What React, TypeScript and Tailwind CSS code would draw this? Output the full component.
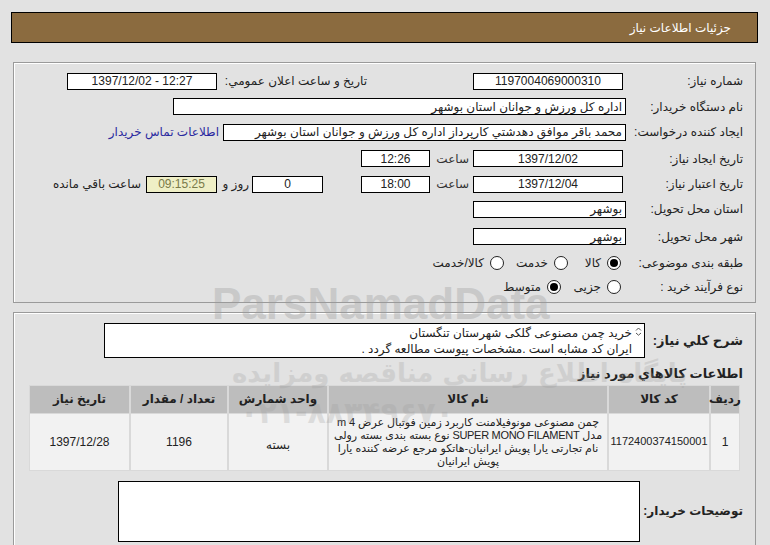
import React from "react";

const Box = ({ w, children, className = "", ltr }: { w: string; children?: React.ReactNode; className?: string; ltr?: boolean }) => (
  <div
    dir={ltr ? "ltr" : undefined}
    className={`${w} h-[17px] bg-white border border-black flex items-center px-[3px] text-[12px] leading-none whitespace-nowrap overflow-hidden ${className}`}
  >
    {children}
  </div>
);

const Radio = ({ checked }: { checked?: boolean }) => (
  <span className="w-[14px] h-[14px] rounded-full border border-[#222] bg-white flex items-center justify-center shrink-0">
    {checked && <span className="w-[8px] h-[8px] rounded-full bg-black" />}
  </span>
);

const Label = ({ children }: { children: React.ReactNode }) => (
  <div className="w-[117px] shrink-0 text-[12px] text-[#222] whitespace-nowrap">{children}</div>
);

export default function App() {
  return (
    <div
      dir="rtl"
      className="relative w-[770px] h-[545px] overflow-hidden bg-[#e2e2e2] text-[#222]"
      style={{ fontFamily: '"Liberation Sans", "DejaVu Sans", Tahoma, sans-serif' }}
    >
      {/* header */}
      <div className="mt-[12px] ml-[11px] mr-[12px] h-[31px] bg-[#8b6b3f] border border-black flex items-center pr-[26px] text-white text-[12px]">
        جزئيات اطلاعات نياز
      </div>

      {/* panel 1 */}
      <div className="mt-[19px] ml-[13px] mr-[14px] h-[241px] border border-[#9a9a9a] shadow-[inset_1px_1px_0_#fff] pt-[5px] pr-[12px] flex flex-col">
        <div className="h-[26px] flex items-center">
          <Label>شماره نياز:</Label>
          <Box w="w-[150px] mr-[3px] justify-center">1197004069000310</Box>
          <div className="w-[106px]" />
          <div className="w-[146px] text-[12px] whitespace-nowrap">تاريخ و ساعت اعلان عمومي:</div>
          <Box ltr w="w-[150px] mr-[4px] justify-center">1397/12/02 - 12:27</Box>
        </div>
        <div className="h-[25px] flex items-center">
          <Label>نام دستگاه خريدار:</Label>
          <Box w="w-[453px]">اداره کل ورزش و جوانان استان بوشهر</Box>
        </div>
        <div className="h-[26px] flex items-center">
          <Label>ايجاد کننده درخواست:</Label>
          <Box w="w-[403px]">محمد باقر موافق دهدشتي کارپرداز اداره کل ورزش و جوانان استان بوشهر</Box>
          <a className="mr-[4px] text-[12px] text-[#2a2aa0] whitespace-nowrap">اطلاعات تماس خريدار</a>
        </div>
        <div className="h-[27px] flex items-center">
          <Label>تاريخ ايجاد نياز:</Label>
          <Box w="w-[150px] mr-[3px] justify-center">1397/12/02</Box>
          <div className="w-[43px] pr-[4px] text-[12px] text-[#333]">ساعت</div>
          <Box w="w-[69px] justify-center">12:26</Box>
        </div>
        <div className="h-[24px] flex items-center">
          <Label>تاريخ اعتبار نياز:</Label>
          <Box w="w-[150px] mr-[3px] justify-center">1397/12/04</Box>
          <div className="w-[43px] pr-[4px] text-[12px] text-[#333]">ساعت</div>
          <Box w="w-[69px] justify-center">18:00</Box>
          <div className="w-[38px]" />
          <Box w="w-[71px] justify-center">0</Box>
          <div className="w-[35px] pr-[3px] text-[12px] whitespace-nowrap">روز و</div>
          <Box w="w-[71px] justify-center !bg-[#efefc6] text-[#7a7a4a] border-[#555]">09:15:25</Box>
          <div className="pr-[5px] text-[12px] whitespace-nowrap">ساعت باقي مانده</div>
        </div>
        <div className="h-[26px] flex items-center">
          <Label>استان محل تحويل:</Label>
          <Box w="w-[153px]">بوشهر</Box>
        </div>
        <div className="h-[29px] flex items-center">
          <Label>شهر محل تحويل:</Label>
          <Box w="w-[153px]">بوشهر</Box>
        </div>
        <div className="h-[24px] flex items-center text-[12px]">
          <Label>طبقه بندی موضوعی:</Label>
          <div className="mr-[5px] flex items-center">
            <Radio checked />
            <span className="mr-[6px] w-[33px]">کالا</span>
            <Radio />
            <span className="mr-[6px] w-[44px]">خدمت</span>
            <Radio />
            <span className="mr-[6px]">کالا/خدمت</span>
          </div>
        </div>
        <div className="h-[24px] flex items-center text-[12px]">
          <Label>نوع فرآيند خريد :</Label>
          <div className="mr-[5px] flex items-center">
            <Radio />
            <span className="mr-[6px] w-[40px]">جزيی</span>
            <Radio checked />
            <span className="mr-[6px]">متوسط</span>
          </div>
        </div>
      </div>

      {/* panel 2 */}
      <div className="mt-[9px] ml-[13px] mr-[14px] h-[300px] border border-[#9a9a9a] shadow-[inset_1px_1px_0_#fff] pt-[10px] pr-[12px] pl-[15px] flex flex-col">
        <div className="flex items-center">
          <div className="w-[98px] shrink-0 text-[13px] font-bold whitespace-nowrap">شرح کلي نياز:</div>
          <div className="w-[541px] h-[35px] bg-white border border-black flex text-[12px] leading-[16px]">
            <div className="w-[12px] flex justify-center pt-[3px]">
              <svg width="7" height="9" viewBox="0 0 7 9">
                <path d="M1 3.5 L3.5 1 L6 3.5" fill="none" stroke="#555" strokeWidth="1" />
                <path d="M1 6 L3.5 8.2 L6 6" fill="none" stroke="#555" strokeWidth="1" />
              </svg>
            </div>
            <div className="pt-[1px] whitespace-nowrap">
              <div>خريد چمن مصنوعی گلکی شهرستان تنگستان</div>
              <div>ايران کد مشابه است .مشخصات پيوست مطالعه گردد .</div>
            </div>
          </div>
        </div>

        <div className="mt-[6px] text-[13px] font-bold">اطلاعات کالاهاي مورد نياز</div>

        <div className="mt-[1px] mr-[3px] w-[711px] bg-[#d9d9d9] p-[1px] flex flex-col gap-[1px]">
          <div className="flex h-[27px] gap-[2px] text-[12px] font-bold">
            <div className="w-[28px] bg-[#bdbdbd] flex items-center justify-center">رديف</div>
            <div className="w-[100px] bg-[#bdbdbd] flex items-center justify-center">کد کالا</div>
            <div className="w-[278px] bg-[#bdbdbd] flex items-center justify-center">نام کالا</div>
            <div className="w-[98px] bg-[#bdbdbd] flex items-center justify-center">واحد شمارش</div>
            <div className="w-[96px] bg-[#bdbdbd] flex items-center justify-center">تعداد / مقدار</div>
            <div className="flex-1 bg-[#bdbdbd] flex items-center justify-center">تاريخ نياز</div>
          </div>
          <div className="flex h-[56px] gap-[2px] text-[12px]">
            <div className="w-[28px] bg-[#f2f2f2] flex items-center justify-center">1</div>
            <div className="w-[100px] bg-[#f2f2f2] flex items-center justify-center text-[11px]">1172400374150001</div>
            <div className="w-[278px] bg-[#f2f2f2] flex flex-col items-center justify-center text-[11px] leading-[13px] whitespace-nowrap tracking-[-0.3px]">
              <div>چمن مصنوعی مونوفيلامنت کاربرد زمين فوتبال عرض 4 m</div>
              <div>مدل SUPER MONO FILAMENT نوع بسته بندی بسته رولی</div>
              <div>نام تجارتی يارا پويش ايرانيان-هاتکو مرجع عرضه کننده يارا</div>
              <div>پويش ايرانيان</div>
            </div>
            <div className="w-[98px] bg-[#f2f2f2] flex items-center justify-center pt-[6px]">بسته</div>
            <div className="w-[96px] bg-[#f2f2f2] flex items-center justify-center">1196</div>
            <div className="flex-1 bg-[#f2f2f2] flex items-center justify-center">1397/12/28</div>
          </div>
        </div>

        <div className="mt-[10px] flex items-center">
          <div className="w-[103px] shrink-0 text-[12px] font-bold whitespace-nowrap">توضيحات خريدار:</div>
          <div className="w-[522px] h-[61px] bg-white border border-black" />
        </div>
      </div>

      {/* watermark */}
      <div className="pointer-events-none absolute inset-0" dir="ltr">
        <div className="absolute left-[212px] top-[282px] text-[44px] font-bold text-[#9b9b9b] opacity-35 leading-none">
          ParsNamadData
        </div>
        <div
          className="absolute left-[232px] top-[360px] text-[26px] font-bold text-[#9b9b9b] opacity-25 leading-none"
          dir="rtl"
          style={{ fontFamily: '"DejaVu Sans", sans-serif' }}
        >
          پايگاه اطلاع رسانی مناقصه ومزايده
        </div>
        <div
          className="absolute left-[240px] top-[398px] text-[30px] font-bold text-[#9b9b9b] opacity-25 leading-none"
          style={{ fontFamily: '"DejaVu Sans", sans-serif' }}
        >
          ۰۲۱-۸۸۳۴۹۶۷۰
        </div>
      </div>
    </div>
  );
}
